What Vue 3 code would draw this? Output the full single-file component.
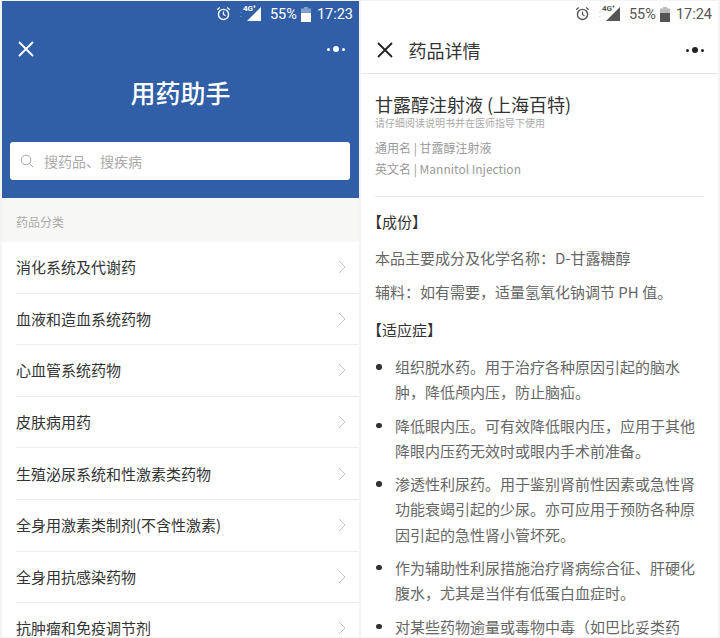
<script setup>
const categories = ['消化系统及代谢药','血液和造血系统药物','心血管系统药物','皮肤病用药','生殖泌尿系统和性激素类药物','全身用激素类制剂(不含性激素)','全身用抗感染药物','抗肿瘤和免疫调节剂']
const uses = [
  '组织脱水药。用于治疗各种原因引起的脑水肿，降低颅内压，防止脑疝。',
  '降低眼内压。可有效降低眼内压，应用于其他降眼内压药无效时或眼内手术前准备。',
  '渗透性利尿药。用于鉴别肾前性因素或急性肾功能衰竭引起的少尿。亦可应用于预防各种原因引起的急性肾小管坏死。',
  '作为辅助性利尿措施治疗肾病综合征、肝硬化腹水，尤其是当伴有低蛋白血症时。',
  '对某些药物逾量或毒物中毒（如巴比妥类药'
]
</script>

<template>
  <div class="screen">
    <section class="pane left">
      <header class="hero">
        <div class="status">
          <svg class="alarm" viewBox="0 0 16 16"><circle cx="8" cy="9" r="5.4" fill="none" stroke="currentColor" stroke-width="1.5"/><path d="M8 5.8V9l2.2 1.4M1.3 4 4 1.6M14.7 4 12 1.6" fill="none" stroke="currentColor" stroke-width="1.3"/></svg>
          <span class="dots">:</span>
          <span class="signal"><svg viewBox="0 0 15 14"><path d="M14 0V14H0Z" fill="currentColor"/></svg><b>4G<sup>+</sup></b></span>
          <span class="pct">55%</span>
          <svg class="battery" viewBox="0 0 10 15"><path d="M3 0h4v1.5h3V15H0V1.5h3Z" fill="currentColor" opacity=".4"/><rect y="6" width="10" height="9" fill="currentColor"/></svg>
          <span class="time">17:23</span>
        </div>
        <div class="nav">
          <svg class="close" viewBox="0 0 16 16"><path d="M1 1 15 15M15 1 1 15" stroke="currentColor" stroke-width="1.8" fill="none"/></svg>
          <span class="more"><i></i><i class="big"></i><i></i></span>
        </div>
        <h1 class="brand">用药助手</h1>
        <div class="search">
          <svg viewBox="0 0 14 14"><circle cx="6" cy="6" r="4.8" fill="none" stroke="currentColor" stroke-width="1"/><path d="M9.5 9.5 13.2 13.2" stroke="currentColor" stroke-width="1"/></svg>
          <span>搜药品、搜疾病</span>
        </div>
      </header>
      <div class="section-label">药品分类</div>
      <ul class="list">
        <li v-for="c in categories" :key="c">
          <span>{{ c }}</span>
          <svg viewBox="0 0 8 14"><path d="M1 1 7 7 1 13" fill="none" stroke="currentColor" stroke-width="1"/></svg>
        </li>
      </ul>
    </section>

    <section class="pane right">
      <div class="status dark">
        <svg class="alarm" viewBox="0 0 16 16"><circle cx="8" cy="9" r="5.4" fill="none" stroke="currentColor" stroke-width="1.5"/><path d="M8 5.8V9l2.2 1.4M1.3 4 4 1.6M14.7 4 12 1.6" fill="none" stroke="currentColor" stroke-width="1.3"/></svg>
        <span class="dots">:</span>
        <span class="signal"><svg viewBox="0 0 15 14"><path d="M14 0V14H0Z" fill="currentColor"/></svg><b>4G<sup>+</sup></b></span>
        <span class="pct">55%</span>
        <svg class="battery" viewBox="0 0 10 15"><path d="M3 0h4v1.5h3V15H0V1.5h3Z" fill="currentColor" opacity=".4"/><rect y="6" width="10" height="9" fill="currentColor"/></svg>
        <span class="time">17:24</span>
      </div>
      <div class="nav dark-nav">
        <svg class="close" viewBox="0 0 16 16"><path d="M1 1 15 15M15 1 1 15" stroke="currentColor" stroke-width="1.8" fill="none"/></svg>
        <span class="page-title">药品详情</span>
        <span class="more"><i></i><i class="big"></i><i></i></span>
      </div>
      <article class="detail">
        <h2>甘露醇注射液 (上海百特)</h2>
        <p class="warn">请仔细阅读说明书并在医师指导下使用</p>
        <p class="meta first">通用名 | 甘露醇注射液</p>
        <p class="meta">英文名 | Mannitol Injection</p>
        <hr />
        <h3>【成份】</h3>
        <p class="body first-body">本品主要成分及化学名称：D-甘露糖醇</p>
        <p class="body">辅料：如有需要，适量氢氧化钠调节 PH 值。</p>
        <h3 class="second">【适应症】</h3>
        <ul class="uses">
          <li v-for="u in uses" :key="u">{{ u }}</li>
        </ul>
      </article>
    </section>
  </div>
</template>

<style>
html, body { margin: 0; background: #fff; }
</style>

<style scoped>
.screen { width: 720px; height: 638px; overflow: hidden; display: flex; gap: 2px; padding: 1px 2px 0 2px; box-sizing: border-box; background: #f4f4f4; font-family: "Noto Sans CJK SC", "Roboto", sans-serif; color: #333; }
.pane { width: 357px; height: 636px; overflow: hidden; background: #fff; flex: none; }
.hero { background: #305fa8; height: 197px; color: #fff; display: flex; flex-direction: column; }
.status { height: 26px; display: flex; align-items: center; justify-content: flex-end; padding-right: 6px; color: #fff; font: 14.5px Roboto, sans-serif; }
.status.dark { color: #555; }
.alarm { width: 15px; height: 15px; margin-right: 9px; margin-top: -1px; }
.dots { font-size: 9px; opacity: .5; margin-right: 5px; }
.signal { width: 15px; height: 14px; position: relative; margin-right: 8px; }
.signal svg { width: 15px; height: 14px; display: block; }
.signal b { position: absolute; left: -4px; top: -3px; font: bold 8px/10px Roboto, sans-serif; white-space: nowrap; }
.signal sup { font-size: 5px; line-height: 0; vertical-align: 3px; }
.pct { margin-right: 4px; }
.battery { width: 10px; height: 15px; margin-right: 6px; }
.nav { height: 44px; display: flex; align-items: center; padding: 0 14px 0 15.5px; }
.close { width: 16px; height: 16px; flex: none; }
.more { margin-left: auto; display: flex; align-items: center; gap: 3px; }
.more i { width: 3px; height: 3px; border-radius: 50%; background: currentColor; }
.more i.big { width: 6px; height: 6px; }
.brand { margin: 5px 0 0; text-align: center; font-size: 25px; line-height: 32px; font-weight: 500; }
.search { margin: 34px 9px 0 8px; height: 38px; flex: none; border-radius: 3px; background: #fff; display: flex; align-items: center; color: #aaa; padding-left: 10px; gap: 10px; font-size: 14px; }
.search svg { width: 14px; height: 14px; }
.section-label { height: 44px; background: #f7f7f5; line-height: 48px; padding-left: 14px; font-size: 12px; color: #aaa; }
.list { list-style: none; margin: 0; padding: 0; }
.list li { height: 51.6px; box-sizing: border-box; margin-left: 14px; padding-right: 13px; border-bottom: 1px solid #ececec; display: flex; align-items: center; justify-content: space-between; font-size: 15px; line-height: 20px; color: #333; }
.list svg { width: 8px; height: 14px; color: #c4c4c4; }
.dark-nav { color: #222; border-bottom: 1px solid #e6e6e6; height: 46px; }
.page-title { margin-left: 16px; font-size: 18px; color: #333; }
.detail { padding: 0 14px; }
h2 { margin: 18px 0 0; font-size: 18px; line-height: 24px; font-weight: 400; color: #333; }
.warn { margin: 0; font-size: 10px; line-height: 14px; color: #aaa; }
.meta { margin: 0; font-size: 12px; line-height: 21px; color: #999; }
.first { margin-top: 7px; }
hr { border: 0; border-top: 1px solid #e6e6e6; margin: 17px 0 0; }
h3 { margin: 14px 0 0 -8px; font-size: 15px; line-height: 22px; font-weight: 400; color: #333; }
.body { margin: 12px 0 0; font-size: 15px; line-height: 22px; color: #666; }
.first-body { margin-top: 14px; }
h3.second { margin-top: 16px; }
.uses { margin: 13px 0 0; padding: 0 0 0 20px; list-style: none; }
.uses li { position: relative; font-size: 15px; line-height: 25.2px; color: #666; margin-bottom: 8.2px; }
.uses li::before { content: ""; position: absolute; left: -19px; top: 10px; width: 5.5px; height: 5.5px; border-radius: 50%; background: #333; }
</style>
